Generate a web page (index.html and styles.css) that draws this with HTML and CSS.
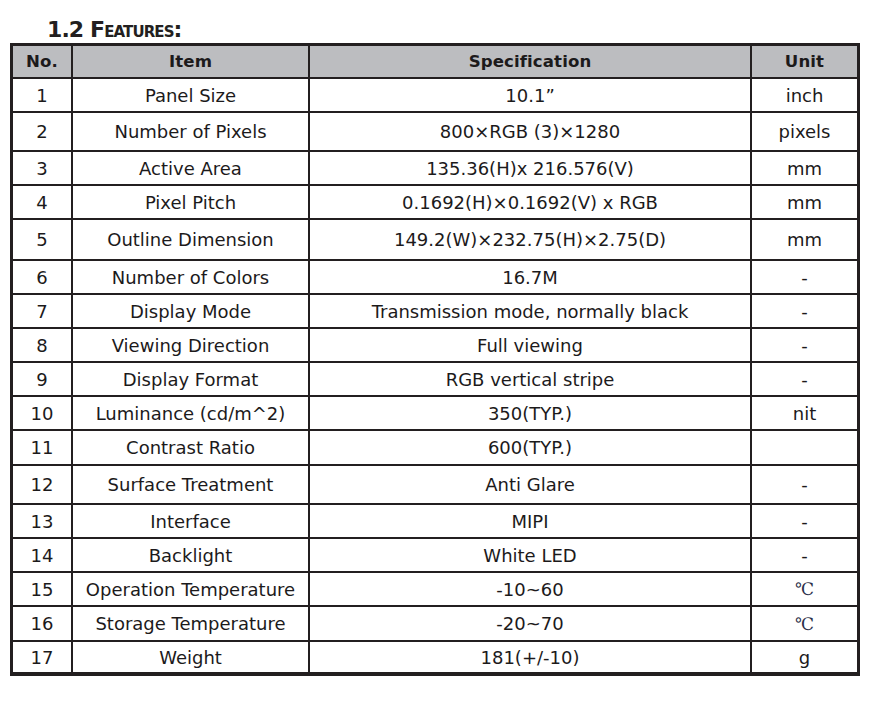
FILE: index.html
```html
<!DOCTYPE html>
<html lang="en">
<head>
<meta charset="utf-8">
<title>1.2 Features</title>
<link rel="stylesheet" href="styles.css">
</head>
<body>
<div class="page">
  <h2 class="title">1.2 Features:</h2>
  <table class="spec">
    <thead>
      <tr class="head">
        <th class="c-no">No.</th>
        <th class="c-item">Item</th>
        <th class="c-spec">Specification</th>
        <th class="c-unit">Unit</th>
      </tr>
    </thead>
    <tbody>
      <tr><td>1</td><td>Panel Size</td><td>10.1”</td><td>inch</td></tr>
      <tr class="h39"><td>2</td><td>Number of Pixels</td><td>800×RGB (3)×1280</td><td>pixels</td></tr>
      <tr><td>3</td><td>Active Area</td><td>135.36(H)x 216.576(V)</td><td>mm</td></tr>
      <tr><td>4</td><td>Pixel Pitch</td><td>0.1692(H)×0.1692(V) x RGB</td><td>mm</td></tr>
      <tr class="h41"><td>5</td><td>Outline Dimension</td><td>149.2(W)×232.75(H)×2.75(D)</td><td>mm</td></tr>
      <tr><td>6</td><td>Number of Colors</td><td>16.7M</td><td>-</td></tr>
      <tr><td>7</td><td>Display Mode</td><td>Transmission mode, normally black</td><td>-</td></tr>
      <tr><td>8</td><td>Viewing Direction</td><td>Full viewing</td><td>-</td></tr>
      <tr><td>9</td><td>Display Format</td><td>RGB vertical stripe</td><td>-</td></tr>
      <tr><td>10</td><td>Luminance (cd/m^2)</td><td>350(TYP.)</td><td>nit</td></tr>
      <tr class="h35"><td>11</td><td>Contrast Ratio</td><td>600(TYP.)</td><td></td></tr>
      <tr class="h39"><td>12</td><td>Surface Treatment</td><td>Anti Glare</td><td>-</td></tr>
      <tr><td>13</td><td>Interface</td><td>MIPI</td><td>-</td></tr>
      <tr><td>14</td><td>Backlight</td><td>White LED</td><td>-</td></tr>
      <tr><td>15</td><td>Operation Temperature</td><td>-10~60</td><td class="celsius">℃</td></tr>
      <tr class="h35"><td>16</td><td>Storage Temperature</td><td>-20~70</td><td class="celsius">℃</td></tr>
      <tr class="last"><td>17</td><td>Weight</td><td>181(+/-10)</td><td>g</td></tr>
    </tbody>
  </table>
</div>
</body>
</html>
```

FILE: styles.css
```css
html, body {
  margin: 0;
  padding: 0;
  background: #ffffff;
}

.page {
  padding: 17px 0 0 10px;
  font-family: "DejaVu Sans", "Liberation Sans", sans-serif;
  color: #1c1a1b;
}

.title {
  margin: 0 0 0 37px;
  font-size: 22px;
  font-weight: bold;
  font-variant: small-caps;
  letter-spacing: -0.9px;
  line-height: 26px;
  height: 26px;
  color: #231f20;
}

.spec {
  border-collapse: separate;
  border-spacing: 0;
  table-layout: fixed;
  width: 850px;
  border-style: solid;
  border-color: #231f20;
  border-width: 3px 3px 4px 3px;
  font-size: 18px;
}

.spec th,
.spec td {
  box-sizing: border-box;
  padding: 0;
  text-align: center;
  vertical-align: middle;
  border-right: 2px solid #231f20;
  border-bottom: 2px solid #231f20;
  white-space: nowrap;
}

.spec th:last-child,
.spec td:last-child {
  border-right: none;
}

.spec tr.last td {
  border-bottom: none;
}

.c-no { width: 60px; }
.c-item { width: 237px; }
.c-spec { width: 442px; }
.c-unit { width: 105px; }

.spec tr { height: 34px; }
.spec tr.head { height: 33px; }
.spec tr.h35 { height: 35px; }
.spec tr.h39 { height: 39px; }
.spec tr.h41 { height: 41px; }
.spec tr.last { height: 30px; }

.spec th {
  background: #bcbdc0;
  font-weight: bold;
  font-size: 16.6px;
  letter-spacing: 0.1px;
}

.spec td.celsius {
  font-family: "DejaVu Serif", "Liberation Serif", serif;
  color: #2b2f4a;
  font-size: 17px;
}
```
